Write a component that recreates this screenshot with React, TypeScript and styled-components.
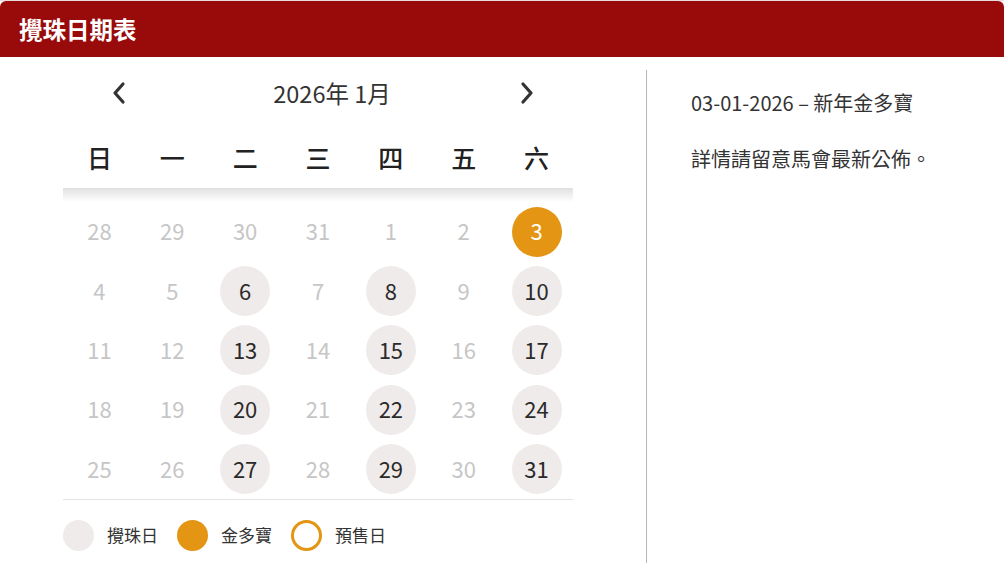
import React from "react";
import styled, { createGlobalStyle } from "styled-components";

const Global = createGlobalStyle`
  html, body { margin: 0; padding: 0; background: #fff; }
  body { font-family: "Noto Sans CJK TC", "Noto Sans", sans-serif; color: #333; }
`;

const Card = styled.div`
  width: 1004px;
  height: 575px;
  box-sizing: border-box;
  border-top: 1px solid #e8dcdc;
  display: flex;
  flex-direction: column;
`;

const Header = styled.div`
  height: 56px;
  background: #990b0b;
  border-radius: 6px 6px 0 0;
  display: flex;
  align-items: center;
  padding-left: 19px;
  color: #fff;
  font-size: 23.5px;
  font-weight: 700;
`;

const Body = styled.div`
  display: flex;
  padding-top: 13px;
  height: 493px;
`;

const Left = styled.div`
  width: 646px;
  box-sizing: border-box;
  padding-left: 63px;
`;

const Calendar = styled.div`
  width: 510px;
`;

const Nav = styled.div`
  height: 48px;
  display: flex;
  align-items: center;
  justify-content: space-between;
  padding: 0 34px 2px 44px;
  box-sizing: border-box;
`;

const NavTitle = styled.div`
  font-size: 23.5px;
  color: #333;
  margin-left: 18px;
`;

const NavBtn = styled.button`
  border: none;
  background: none;
  padding: 0;
  width: 24px;
  height: 24px;
  display: flex;
  align-items: center;
  justify-content: center;
  cursor: pointer;
`;

const WeekRow = styled.div`
  margin-top: 12px;
  height: 58px;
  box-sizing: border-box;
  padding-bottom: 4px;
  display: grid;
  grid-template-columns: repeat(7, 1fr);
  align-items: center;
  justify-items: center;
  font-size: 25px;
  font-weight: 500;
  color: #222;
`;

const ShadowBand = styled.div`
  height: 14px;
  background: linear-gradient(#e0e0e0, #fff);
`;

const Grid = styled.div`
  display: grid;
  grid-template-columns: repeat(7, 1fr);
  grid-auto-rows: 59.4px;
  align-items: center;
  justify-items: center;
  border-bottom: 1px solid #e2e2e2;
`;

const Day = styled.div<{ $kind: "muted" | "draw" | "gold" | "plain" }>`
  width: 50px;
  height: 50px;
  box-sizing: border-box;
  padding-bottom: 3px;
  border-radius: 50%;
  display: flex;
  align-items: center;
  justify-content: center;
  font-size: 22px;
  background: ${(p) =>
    p.$kind === "draw" ? "#f0ebeb" : p.$kind === "gold" ? "#e39513" : "transparent"};
  color: ${(p) =>
    p.$kind === "muted" ? "#c6c6c6" : p.$kind === "gold" ? "#fff" : "#2a2a2a"};
`;

const Legend = styled.div`
  display: flex;
  align-items: center;
  padding-top: 20px;
`;

const LegendDot = styled.span<{ $kind: "draw" | "gold" | "presale" }>`
  width: 31px;
  height: 31px;
  box-sizing: border-box;
  border-radius: 50%;
  background: ${(p) =>
    p.$kind === "draw" ? "#f0ebeb" : p.$kind === "gold" ? "#e39513" : "#fff"};
  border: ${(p) => (p.$kind === "presale" ? "3px solid #e39513" : "none")};
  margin-right: 13px;
`;

const LegendLabel = styled.span`
  font-size: 17px;
  color: #333;
  margin-right: 19px;
  padding-bottom: 2px;
`;

const Right = styled.div`
  flex: 1;
  border-left: 1px solid #b5b5b5;
  padding-left: 44px;
  padding-top: 18px;
`;

const Para = styled.p`
  margin: 0 0 27px 0;
  font-size: 20px;
  line-height: 29px;
  color: #333;
`;

const Chevron = ({ dir }: { dir: "left" | "right" }) => (
  <svg width="16" height="24" viewBox="0 0 16 24">
    <path
      d={dir === "left" ? "M12 3 L4 12 L12 21" : "M4 3 L12 12 L4 21"}
      fill="none"
      stroke="#333"
      strokeWidth="3.2"
      strokeLinecap="round"
      strokeLinejoin="round"
    />
  </svg>
);

type Kind = "muted" | "draw" | "gold" | "plain";
const days: { n: number; k: Kind }[] = [];
[28, 29, 30, 31].forEach((n) => days.push({ n, k: "muted" }));
for (let n = 1; n <= 31; n++) {
  let k: Kind = "muted";
  if (n === 3) k = "gold";
  else if ([6, 8, 10, 13, 15, 17, 20, 22, 24, 27, 29, 31].includes(n)) k = "draw";
  days.push({ n, k });
}

const weekdays = ["日", "一", "二", "三", "四", "五", "六"];

export default function App() {
  return (
    <>
      <Global />
      <Card>
        <Header>攪珠日期表</Header>
        <Body>
          <Left>
            <Calendar>
              <Nav>
                <NavBtn aria-label="prev">
                  <Chevron dir="left" />
                </NavBtn>
                <NavTitle>2026年 1月</NavTitle>
                <NavBtn aria-label="next">
                  <Chevron dir="right" />
                </NavBtn>
              </Nav>
              <WeekRow>
                {weekdays.map((w) => (
                  <span key={w}>{w}</span>
                ))}
              </WeekRow>
              <ShadowBand />
              <Grid>
                {days.map((d, i) => (
                  <Day key={i} $kind={d.k}>
                    {d.n}
                  </Day>
                ))}
              </Grid>
              <Legend>
                <LegendDot $kind="draw" />
                <LegendLabel>攪珠日</LegendLabel>
                <LegendDot $kind="gold" />
                <LegendLabel>金多寶</LegendLabel>
                <LegendDot $kind="presale" />
                <LegendLabel>預售日</LegendLabel>
              </Legend>
            </Calendar>
          </Left>
          <Right>
            <Para>03-01-2026 – 新年金多寶</Para>
            <Para>詳情請留意馬會最新公佈。</Para>
          </Right>
        </Body>
      </Card>
    </>
  );
}
